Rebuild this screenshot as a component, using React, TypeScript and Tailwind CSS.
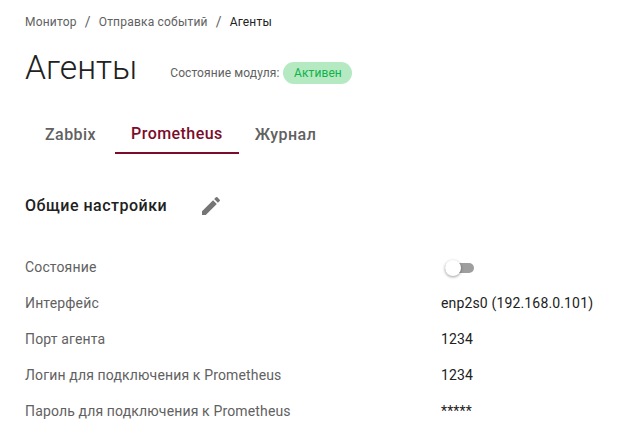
import React from "react";

const rows = [
  { label: "Интерфейс", value: "enp2s0 (192.168.0.101)" },
  { label: "Порт агента", value: "1234" },
  { label: "Логин для подключения к Prometheus", value: "1234" },
  { label: "Пароль для подключения к Prometheus", value: "*****" },
];

const App: React.FC = () => {
  return (
    <div className="h-[438px] w-[624px] overflow-hidden bg-white pl-[25px] pt-[15px] font-['Roboto',sans-serif]">
      <div className="flex h-[14px] items-center text-[12px] leading-[14px] tracking-[0.2px] text-[#616161]">
        <span>Монитор</span>
        <span className="mx-[8px] text-[14px]">/</span>
        <span>Отправка событий</span>
        <span className="mx-[8px] text-[14px]">/</span>
        <span className="text-[#212121]">Агенты</span>
      </div>

      <div className="mt-[19px] flex h-[40px] items-center">
        <h1 className="text-[33.6px] font-light leading-[40px] text-[#212121]">Агенты</h1>
        <span className="ml-[33px] mt-[10px] text-[12px] tracking-[0.1px] text-[#616161]">Состояние модуля:</span>
        <span className="ml-[4px] mt-[10px] flex h-[22px] w-[69px] items-center justify-center rounded-full bg-[#b4e9c1] text-[12px] tracking-[0.1px] text-[#0fb34a]">
          Активен
        </span>
      </div>

      <div className="mt-[22px] ml-[4px] flex gap-[3px] text-[16px] font-medium tracking-[0.45px] text-[#616161]">
        <div className="flex h-[44px] items-center px-[16px] pt-[6px]">Zabbix</div>
        <div className="flex h-[44px] items-center border-b-2 border-[#7b0c2a] px-[16px] pt-[6px] text-[#7b0c2a]">Prometheus</div>
        <div className="-ml-[3px] flex h-[44px] items-center px-[16px] pt-[6px]">Журнал</div>
      </div>

      <div className="mt-[28px] flex h-[48px] items-center">
        <span className="w-[142px] whitespace-nowrap text-[16px] font-medium leading-[24px] tracking-[0.5px] text-[#212121]">Общие настройки</span>
        <button className="ml-[32px] text-[#757575]">
          <svg width="24" height="24" viewBox="0 0 24 24" fill="currentColor" className="block">
            <path d="M3 17.25V21h3.75L17.81 9.94l-3.75-3.75L3 17.25zM20.71 7.04a1 1 0 0 0 0-1.41l-2.34-2.34a1 1 0 0 0-1.41 0l-1.83 1.83 3.75 3.75 1.83-1.83z" />
          </svg>
        </button>
      </div>

      <div className="mt-[19px] flex flex-col text-[14px] tracking-[0.15px]">
        <div className="flex h-[36px] items-center">
          <span className="w-[416px] text-[#616161]">Состояние</span>
          <span className="relative ml-[4px] mt-[2px] block h-[10px] w-[29px] rounded-full bg-[#9e9e9e]">
            <span className="absolute -top-[3px] left-0 h-[16px] w-[16px] rounded-full bg-white shadow-[0_1px_3px_rgba(0,0,0,0.4)]" />
          </span>
        </div>
        {rows.map((row) => (
          <div key={row.label} className="flex h-[36px] items-center">
            <span className="w-[416px] text-[#616161]">{row.label}</span>
            <span className="text-[#212121]">{row.value}</span>
          </div>
        ))}
      </div>
    </div>
  );
};

export default App;
